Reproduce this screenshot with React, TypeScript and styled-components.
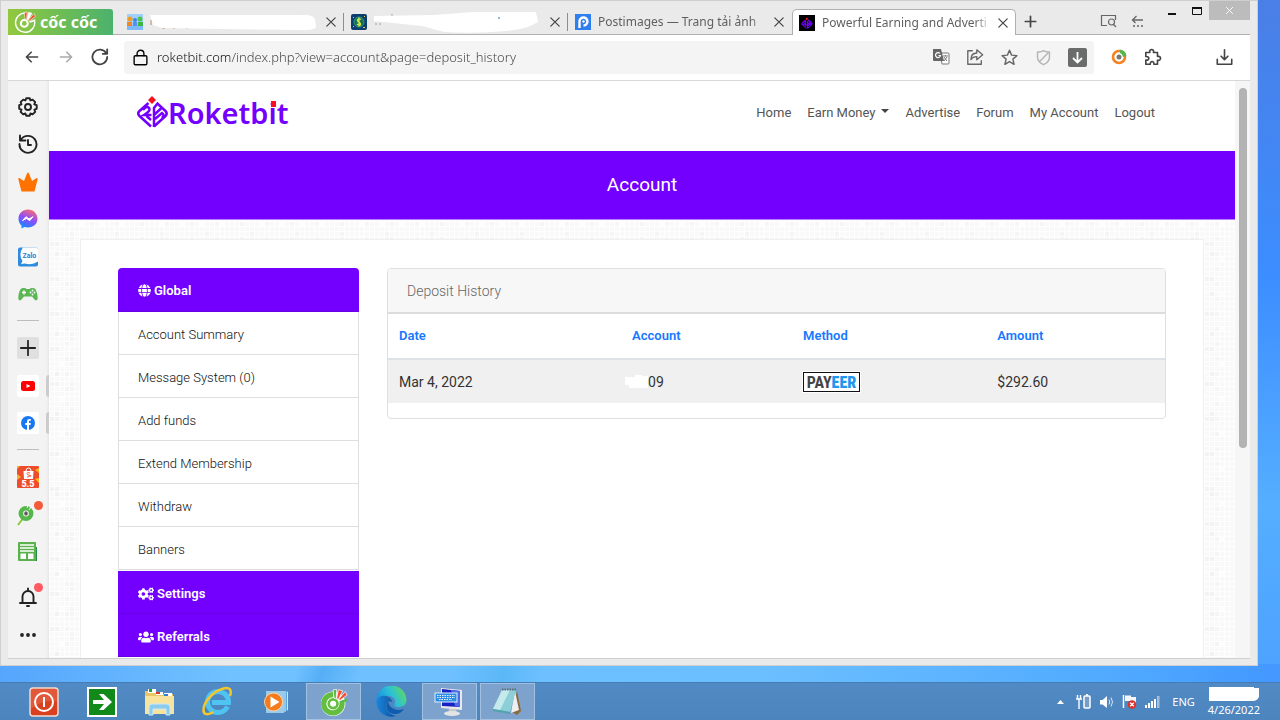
import React from "react";
import styled, { createGlobalStyle, css } from "styled-components";
import { FaGlobe, FaCogs, FaUsers } from "react-icons/fa";

const uiFont = `"Noto Sans", "Open Sans", sans-serif`;
const siteFont = `Roboto, "Liberation Sans", sans-serif`;
const purple = "#7300ff";

const GlobalStyle = createGlobalStyle`
  *, *::before, *::after { box-sizing: border-box; }
  body { margin: 0; font-family: ${uiFont}; overflow: hidden; }
  button { border: 0; padding: 0; background: none; font: inherit; color: inherit; cursor: pointer; }
  a { color: inherit; text-decoration: none; }
  ul { list-style: none; margin: 0; padding: 0; }
  h1, h2 { margin: 0; font-weight: 400; }
  svg { display: block; flex: none; }
`;

const Desktop = styled.div`
  height: 100vh;
  display: flex;
  flex-direction: column;
  background:
    linear-gradient(110deg, transparent 0 23%, #3f9fec88 25%, transparent 28% 35%, #48aef077 39%, transparent 42%) 0 100% / 100% 56px no-repeat,
    linear-gradient(90deg, #55a6fd, #70c1ff 18%, #6bbfff 60%, #50a9ff 88%, #4397ff) 0 100% / 100% 56px no-repeat,
    linear-gradient(#4a7fe6, #3c8dff 38%, #55aeff 70%, #4b9fff);
`;

const Window = styled.main`
  flex: 1;
  min-height: 0;
  display: flex;
  flex-direction: column;
  margin: 0 22px 16px 0;
  padding: 0 7px 6px;
  background: #eaeaea;
  border: 1px solid #cfcfcf;
`;

/* ---------- tab strip ---------- */

const TabStrip = styled.header`
  height: 34px;
  display: flex;
  align-items: flex-end;
  box-shadow: inset 0 -1px #b0b0b0;
`;

const BrandButton = styled.button`
  width: 105px;
  height: 26px;
  margin-right: 7px;
  display: flex;
  align-items: center;
  gap: 4px;
  padding-left: 6px;
  border-radius: 0 3px 0 0;
  background: linear-gradient(90deg, #92c83e, #4bb26d);
  color: #fff;
  font: 700 16px/20px "Noto Sans", sans-serif;
`;

const Tabs = styled.div`
  display: flex;
  align-items: flex-end;
  flex: 0 1 896px;
  min-width: 0;
`;

const Tab = styled.div<{ $active?: boolean; $divided?: boolean }>`
  flex: 1 1 0;
  min-width: 0;
  height: 26px;
  display: flex;
  align-items: center;
  gap: 7px;
  padding: 0 5px 0 7px;
  color: #5f5f5f;
  font-size: 12px;
  line-height: 20px;
  ${(p) =>
    p.$divided &&
    css`
      background: linear-gradient(#8d8d8d, #8d8d8d) 100% 4px / 1px 18px no-repeat;
    `}
  ${(p) =>
    p.$active &&
    css`
      background: #fff;
      border: 1px solid #b0b0b0;
      border-bottom: 0;
      border-radius: 5px 5px 0 0;
      padding: 0 4px 0 6px;
    `}
`;

const TabTitle = styled.span`
  flex: 1;
  min-width: 0;
  overflow: hidden;
  white-space: nowrap;
  mask-image: linear-gradient(90deg, #000 92%, #0003);
`;

const TabCover = styled.span`
  flex: 1;
  min-width: 0;
  display: flex;
  overflow: hidden;
`;

const IconButton = styled.button<{ $w?: number; $color?: string }>`
  width: ${(p) => p.$w ?? 34}px;
  height: 28px;
  flex: none;
  display: flex;
  align-items: center;
  justify-content: center;
  color: ${(p) => p.$color ?? "#444"};
`;

const StripTools = styled.div`
  display: flex;
  margin-left: auto;
`;

const WindowControls = styled.div`
  align-self: flex-start;
  display: flex;
  margin-left: 6px;
`;

const ControlButton = styled.button<{ $close?: boolean }>`
  width: ${(p) => (p.$close ? 41 : 25)}px;
  height: 19px;
  display: flex;
  align-items: center;
  justify-content: center;
  color: ${(p) => (p.$close ? "#fff" : "#111")};
  background: ${(p) => (p.$close ? "#bcbcbc" : "none")};
`;

/* ---------- toolbar ---------- */

const Toolbar = styled.div`
  height: 46px;
  display: flex;
  align-items: center;
  padding: 0 9px 1px 7px;
  background: #fff;
  border-bottom: 1px solid #d8d8d8;
`;

const AddressBar = styled.form`
  flex: 1;
  min-width: 0;
  height: 33px;
  display: flex;
  align-items: center;
  margin: 0 8px 0 7px;
  padding-left: 8px;
  border-radius: 3px;
  background: #f4f4f4;
`;

const AddressInput = styled.input`
  flex: 1;
  min-width: 0;
  height: 24px;
  margin-left: 8px;
  padding: 0;
  border: 0;
  outline: 0;
  font: 300 13px/20px ${uiFont};
  background: linear-gradient(90deg, #111 73px, #444 73px);
  background-clip: text;
  -webkit-text-fill-color: transparent;
`;

const Spacer = styled.span`
  width: 37px;
`;

/* ---------- body ---------- */

const Body = styled.div`
  flex: 1;
  min-height: 0;
  display: flex;
  background: #fff;
  border-bottom: 1px solid #d0d0d0;
`;

const Rail = styled.nav`
  width: 41px;
  flex: none;
  display: flex;
  flex-direction: column;
  align-items: center;
  padding: 12px 1px 9px 0;
  background: linear-gradient(90deg, #f3f3f3 38px, #e6e6e6);
  overflow: hidden;
`;

const RailGroup = styled.div<{ $h: number; $bottom?: boolean }>`
  height: ${(p) => p.$h}px;
  flex: none;
  display: flex;
  flex-direction: column;
  justify-content: space-between;
  margin-top: ${(p) => (p.$bottom ? "auto" : "0")};
`;

const RailButton = styled.button<{ $bg?: string }>`
  position: relative;
  width: 28px;
  height: 28px;
  display: flex;
  align-items: center;
  justify-content: center;
  color: #222;
  &::before {
    content: "";
    position: absolute;
    inset: 3px;
    border-radius: 2px;
    background: ${(p) => p.$bg ?? "none"};
  }
  & > svg {
    position: relative;
  }
`;

const RunningMark = styled.i`
  position: absolute;
  right: -8px;
  top: 3px;
  width: 4px;
  height: 22px;
  border-radius: 3px 0 0 3px;
  background: #ccc;
`;

const Dot = styled.i<{ $color: string }>`
  position: absolute;
  right: -1px;
  top: 0;
  width: 9px;
  height: 9px;
  border-radius: 50%;
  background: ${(p) => p.$color};
`;

const RailRule = styled.hr`
  width: 22px;
  height: 1px;
  margin: 12px 0 13px;
  flex: none;
  border: 0;
  background: #bdbdbd;
`;

const Site = styled.div`
  flex: 1;
  min-width: 0;
  display: flex;
  flex-direction: column;
  font-family: ${siteFont};
  overflow: hidden;
  background:
    repeating-linear-gradient(90deg, #fefefe 0 1px, transparent 1px 5px),
    repeating-linear-gradient(#fefefe 0 1px, transparent 1px 5px),
    conic-gradient(from 0deg at 5px 5px, transparent 75%, #f2f2f2 0) 5px 10px / 35px 40px,
    conic-gradient(from 0deg at 5px 5px, transparent 75%, #f5f5f5 0) 15px 5px / 25px 15px,
    conic-gradient(from 0deg at 10px 5px, transparent 75%, #f3f3f3 0) 0 20px / 55px 35px,
    conic-gradient(from 0deg at 5px 10px, transparent 75%, #f5f5f5 0) 20px 0 / 45px 25px,
    conic-gradient(from 0deg at 5px 5px, transparent 75%, #fdfdfd 0) 10px 0 / 20px 35px,
    #f9f9f9;
`;

const SiteHeader = styled.header`
  height: 70px;
  flex: none;
  display: flex;
  align-items: center;
  justify-content: space-between;
  padding: 0 80px 7px 88px;
  background: #fff;
`;

const Logo = styled.a`
  display: flex;
  align-items: center;
  color: ${purple};
  font: 600 29px/36px "Noto Sans", sans-serif;
`;

const DottedI = styled.span`
  position: relative;
  &::after {
    content: "";
    position: absolute;
    left: 2px;
    top: 8px;
    width: 5px;
    height: 6px;
    background: #f5121c;
  }
`;

const SiteNav = styled.nav`
  display: flex;
  gap: 16px;
  color: #555;
  font-size: 13px;
  line-height: 20px;
`;

const NavLink = styled.a<{ $menu?: boolean }>`
  white-space: nowrap;
  ${(p) =>
    p.$menu &&
    css`
      &::after {
        content: "";
        display: inline-block;
        margin-left: 6px;
        vertical-align: 4px;
        border: 4px solid transparent;
        border-top-color: #444;
        border-bottom: 0;
      }
    `}
`;

const Banner = styled.section`
  height: 69px;
  flex: none;
  display: flex;
  align-items: center;
  justify-content: center;
  background: ${purple};
  color: #fff;
  border-bottom: 1px solid #b981ff;
  h1 {
    font-size: 19px;
    line-height: 28px;
  }
`;

const Sheet = styled.section`
  flex: 1 0 auto;
  display: flex;
  align-items: flex-start;
  gap: 28px;
  margin: 19px 31px 0;
  padding: 28px 37px 0;
  background: #fff;
  border: 1px solid #efefef;
  border-bottom: 0;
`;

const Menu = styled.aside`
  flex: 0 0 241px;
`;

const MenuHead = styled.button<{ $first?: boolean }>`
  width: 100%;
  height: ${(p) => (p.$first ? 44 : 43)}px;
  display: flex;
  align-items: center;
  gap: 3px;
  padding: ${(p) => (p.$first ? 2 : 3)}px 20px 0;
  border-radius: ${(p) => (p.$first ? "4px 4px 0 0" : "0")};
  border-bottom: 1px solid #6700e4;
  background: ${purple};
  color: #fff;
  font: 600 13px/20px ${siteFont};
`;

const MenuList = styled.ul`
  margin-bottom: 1px;
  border: 1px solid #dfdfdf;
  border-width: 0 1px;
`;

const MenuItem = styled.li`
  height: 43px;
  padding: 13px 19px 0;
  border-bottom: 1px solid #dfdfdf;
  color: #111;
  font-size: 13px;
  font-weight: 300;
  line-height: 20px;
`;

const Panel = styled.section`
  flex: 1;
  min-width: 0;
  padding-bottom: 15px;
  border: 1px solid #dfdfdf;
  border-radius: 4px;
  overflow: hidden;
  h2 {
    height: 43px;
    padding: 12px 19px 0;
    background: #f7f7f7;
    color: #666;
    font-size: 14px;
    font-weight: 300;
    line-height: 20px;
  }
`;

const HistoryTable = styled.table`
  width: 100%;
  table-layout: fixed;
  border-collapse: separate;
  border-spacing: 0;
  font-size: 14px;
  line-height: 20px;
  text-align: left;
  th,
  td {
    padding: 0 11px;
  }
  th {
    height: 48px;
    color: #1677ff;
    font-size: 13px;
    font-weight: 600;
    border-top: 2px solid #dcdcdc;
    border-bottom: 2px solid #dee2e6;
  }
  td {
    height: 43px;
    background: #f0f0f0;
    color: #333;
  }
`;

const Col = styled.col<{ $w: number }>`
  width: ${(p) => p.$w}%;
`;

const AccountNo = styled.span`
  display: flex;
  align-items: center;
  margin-left: -7px;
`;

const Payeer = styled.span`
  width: 57px;
  height: 20px;
  display: flex;
  justify-content: center;
  border: 1px solid #111;
  background: #fff;
  color: #444;
  font: 700 16px/19px "Liberation Sans Narrow", "Roboto Condensed", Roboto, sans-serif;
  box-shadow: 0 0 0 1px #fff;
  b {
    color: #1f97ee;
  }
`;

const ScrollTrack = styled.div`
  width: 15px;
  flex: none;
  padding: 7px 4px;
  background: #f6f6f6;
`;

const ScrollThumb = styled.div`
  width: 8px;
  height: 64%;
  border-radius: 4px;
  background: #b3b3b3;
`;

/* ---------- taskbar ---------- */

const Taskbar = styled.footer`
  height: 38px;
  flex: none;
  display: flex;
  align-items: center;
  padding: 0 20px 0 16px;
  background: linear-gradient(#528ac5, #4c84bd);
  border-top: 1px solid #447cb5;
  color: #fff;
`;

const TaskButtons = styled.div`
  display: flex;
  gap: 3px;
`;

const TaskButton = styled.button<{ $open?: boolean }>`
  width: 55px;
  height: 37px;
  display: flex;
  align-items: center;
  justify-content: center;
  border: 1px solid ${(p) => (p.$open ? "#a2c0df" : "transparent")};
  background: ${(p) => (p.$open ? "#7ca2cd" : "none")};
`;

const Tray = styled.div`
  display: flex;
  align-items: center;
  margin-left: auto;
  font-size: 11px;
  line-height: 16px;
`;

const TrayButton = styled.button`
  width: 23px;
  height: 28px;
  display: flex;
  align-items: center;
  justify-content: center;
`;

const Language = styled.button`
  margin: 0 13px 0 8px;
`;

const Clock = styled.div`
  display: flex;
  flex-direction: column;
  align-items: center;
`;

/* ---------- drawings ---------- */

type LineProps = { size?: number; w?: number; children: React.ReactNode };
const Line = ({ size = 20, w = 1.5, children }: LineProps) => (
  <svg width={size} height={size} viewBox="0 0 20 20" fill="none" stroke="currentColor" strokeWidth={w} strokeLinecap="round" strokeLinejoin="round">
    {children}
  </svg>
);

const CloseIcon = ({ size = 12 }: { size?: number }) => (
  <Line size={size} w={2}>
    <path d="M3 3l14 14M17 3L3 17" />
  </Line>
);

const CocCocMark = ({ size, light }: { size: number; light?: boolean }) => {
  const c = light ? "#fff" : "#63bd3e";
  return (
    <svg width={size} height={size} viewBox="0 0 32 32">
      {!light && <circle cx="15" cy="18" r="14" fill="#fff" />}
      {light ? (
        <path d="M17 3A14 14 0 1 0 30 15" fill="none" stroke={c} strokeWidth="2" />
      ) : (
        <path d="M15 7.500A10.500 10.500 0 1 0 25 16" fill="none" stroke={c} strokeWidth="6" />
      )}
      <circle cx="15" cy="18" r="5" fill={light ? "none" : "#fff"} stroke={c} strokeWidth="3" />
      <path d="M15 2l4-.5-.5 11-2.500-1z" fill={light ? "#f2502e" : "#57b947"} stroke="#fff" strokeWidth=".8" />
      <path d="M21 2l5 1-5 10-2-1z" fill={light ? "#fff" : "#f2502e"} stroke="#fff" strokeWidth=".8" />
      <path d="M29 4l2 4-8 6-2-1z" fill="#f2502e" stroke="#fff" strokeWidth=".8" />
      <path d="M31 12l0 3-8 2-1-2z" fill={light ? "#fff" : "#57b947"} />
    </svg>
  );
};

const PeopleFavicon = () => (
  <svg width="16" height="16" viewBox="0 0 16 16">
    <rect width="16" height="16" fill="#9fd0fb" />
    <path d="M0 11h16v5H0z" fill="#7dbaf7" />
    <circle cx="3" cy="5" r="2.500" fill="#f39a23" /><path d="M0 8h5v4H0z" fill="#f0852a" />
    <circle cx="8" cy="6" r="2" fill="#3d87e8" /><path d="M6 8h4v4H6z" fill="#5a8fe8" />
    <circle cx="13" cy="5" r="2.500" fill="#4fc24c" /><path d="M11 8h5v4h-5z" fill="#3db548" />
  </svg>
);

const CoinFavicon = () => (
  <svg width="16" height="16" viewBox="0 0 16 16">
    <rect width="16" height="16" rx="2" fill="#0d3f6e" />
    <circle cx="8" cy="8" r="5" fill="#14704f" stroke="#2a9a86" />
    <path d="M10 5.500C7 4 5.500 6 7 7.500S10 9 9.500 10.500 7 11 6 10M8 3.500v9" fill="none" stroke="#d9e64a" strokeWidth="1.300" />
    <path d="M2 3h1v1H2zM13 2h1v1h-1zM2 12h1v1H2zM12 13h2v1h-2z" fill="#f3c83a" />
  </svg>
);

const PostFavicon = () => (
  <svg width="16" height="16" viewBox="0 0 16 16">
    <rect width="16" height="16" fill="#2f7ef0" />
    <path d="M4.500 14V8A4 4 0 1 1 8.500 11.500" fill="none" stroke="#fff" strokeWidth="2.400" />
    <circle cx="8.500" cy="7.500" r="1.200" fill="#fff" />
  </svg>
);

const RoketShape = ({ w = 1.8 }: { w?: number }) => (
  <g>
    <path d="M11.500 7L2.500 15Q0 17.500 2.500 20L14 30.500M6 14q4-5 6-2t-5 7h7.500M9.500 20l4.500 4" fill="none" stroke="#7300ff" strokeWidth={w} />
    <path d="M17 31V12l3.500-4.500 8 7.500q2.500 2.500 0 5L17 30.500M17 19l7.500-7M18 23l7-6q3 2 0 5" fill="none" stroke="#7300ff" strokeWidth={w} />
    <path d="M15 0l4 4-4 4-4-4z" fill="#f5121c" />
  </g>
);

const RoketMark = () => (
  <svg width="31" height="33" viewBox="0 0 31 33">
    <RoketShape w={2.5} />
  </svg>
);

const RoketFavicon = () => (
  <svg width="16" height="16" viewBox="-7 -7 45 45">
    <rect x="-7" y="-7" width="45" height="45" fill="#000" />
    <RoketShape w={3} />
  </svg>
);

const TranslateIcon = () => (
  <svg width="18" height="18" viewBox="0 0 18 18">
    <path d="M8 5h8a1 1 0 0 1 1 1v9a1 1 0 0 1-1 1H10z" fill="#fff" stroke="#777" />
    <path d="M1 1h8l3 12H2a1 1 0 0 1-1-1z" fill="#666" />
    <path d="M8 5.500a2.500 2.500 0 1 0 .500 2H6.500" fill="none" stroke="#fff" strokeWidth="1.200" />
    <path d="M11 8h5M13.500 7v1M12 9l3 4M15 9l-3 4" stroke="#777" fill="none" />
  </svg>
);

const PuzzleIcon = () => (
  <Line size={18} w={1.8}>
    <path d="M2 5h4.500c-1.500-4.500 5.500-4.500 4 0H15v4.500c4.500-1.500 4.500 5.500 0 4V18h-4c.5-4-4.500-4-4 0H2v-4.500c4.500.5 4.500-4.500 0-4z" />
  </Line>
);

const Messenger = () => (
  <svg width="20" height="20" viewBox="0 0 20 20">
    <defs>
      <linearGradient id="msg" x1="0.300" y1="1" x2="0.700" y2="0">
        <stop offset="0" stopColor="#0b8dff" /><stop offset="0.500" stopColor="#8b4dfb" /><stop offset="1" stopColor="#ff6a70" />
      </linearGradient>
    </defs>
    <path d="M10 .5C4.500.5.500 4.500.500 9.700c0 2.800 1.100 5.200 3 6.800v3l2.900-1.600c1.100.3 2.300.5 3.600.5 5.500 0 9.500-3.800 9.500-8.700S15.500.5 10 .5z" fill="url(#msg)" />
    <path d="M4.500 11.500L8 7.700l3 2.300 4-2.300-3.300 4-3.100-2.300z" fill="#fff" stroke="#fff" strokeLinejoin="round" />
  </svg>
);

const Zalo = () => (
  <svg width="20" height="20" viewBox="0 0 20 20">
    <path d="M2 .5h16a2 2 0 0 1 2 2v15a2 2 0 0 1-2 2H2a2 2 0 0 1-2-2v-15a2 2 0 0 1 2-2z" fill="#2f8bdb" />
    <path d="M5 .5h13a2 2 0 0 1 2 2v12q-6 4-13 2l-4 .500 1.500-3Q0 7 5 .5z" fill="#fff" />
    <text x="4.500" y="11" fontFamily="Roboto, sans-serif" fontSize="7" fontWeight="700" fill="#1f7fd6">Zalo</text>
  </svg>
);

const Gamepad = () => (
  <svg width="20" height="20" viewBox="0 0 20 20">
    <path d="M5 4h2l1.500 1h3L13 4h2c3 0 4.500 5 4.700 10 .1 2.500-2 3-3.200 1.500L14 12.500H6L3.500 15.500C2.300 17 .2 16.500.3 14 .5 9 2 4 5 4z" fill="#5cb654" />
    <path d="M6 6.500v4M4 8.500h4" stroke="#fff" strokeWidth="1.400" />
    <circle cx="12.500" cy="8.500" r=".9" fill="#fff" /><circle cx="14.500" cy="6.500" r=".9" fill="#fff" /><circle cx="16.500" cy="8.500" r=".9" fill="#fff" /><circle cx="14.500" cy="10.500" r=".9" fill="#fff" />
  </svg>
);

const Shopee = () => (
  <svg width="22" height="22" viewBox="0 0 22 22">
    <rect width="22" height="22" rx="1" fill="#ee4d2d" />
    <path d="M0 8l4 3-4 3zM22 2l-4 2 4 3zM0 0h3L0 3zM22 12l-4 1 4 4z" fill="#f8b51f" />
    <path d="M6.500 5h10l-.500 8H7z" fill="#fff" /><path d="M9 5q0-3 2.500-3T14 5" fill="none" stroke="#fff" />
    <path d="M13 7q-3-1.200-3 .500t3 2-3 1.500" fill="none" stroke="#ee4d2d" strokeWidth=".9" />
    <text x="11" y="21" textAnchor="middle" fontFamily="Roboto, sans-serif" fontSize="9" fontWeight="900" fill="#fff">5.5</text>
  </svg>
);

const RocketSearch = () => (
  <svg width="22" height="22" viewBox="0 0 22 22">
    <path d="M1 21l6-8" stroke="#8ac740" strokeWidth="2" />
    <circle cx="9" cy="9.500" r="5.200" fill="#fff" stroke="#55b64a" strokeWidth="4.500" />
    <circle cx="9" cy="9.500" r="2" fill="#555" stroke="#aaa" />
    <path d="M10 4l1-3M12 6l2-3" stroke="#fff" />
  </svg>
);

const News = () => (
  <svg width="20" height="20" viewBox="0 0 20 20">
    <path d="M17 5h2v14H3z" fill="#2b8b4b" />
    <rect x="0" y="0" width="18" height="19" rx="1" fill="#5bb24c" />
    <path d="M2 3h14M2 6h14M2 9h14" stroke="#fff" strokeWidth="1.400" />
    <path d="M2.500 11.500h5.500v5.500H2.500zM10 11.500h5.500v5.500H10z" fill="#fff" />
  </svg>
);

const Edge = () => (
  <svg width="31" height="31" viewBox="0 0 31 31">
    <defs>
      <linearGradient id="edgeA" x1="0" x2="1" y1="0.600" y2="0.200">
        <stop offset="0" stopColor="#1b8fe0" /><stop offset="0.500" stopColor="#2cc0d8" /><stop offset="1" stopColor="#62dd52" />
      </linearGradient>
      <linearGradient id="edgeB" x1="0" x2="1"><stop offset="0" stopColor="#1a86dc" /><stop offset="1" stopColor="#0e4f9c" /></linearGradient>
    </defs>
    <path d="M.5 15A15 15 0 0 1 30.500 14c0 5-4 7-8 7-3 0-5-1-4-3 2-4-1-8-6-8C7 10 2 13 .5 17z" fill="url(#edgeA)" />
    <path d="M.5 15C2 10 7 9 10 10c4 1 6 4 6 6-3-2-6 0-6 4 0 5 5 9 10 10-10 3-20-4-19.500-15z" fill="url(#edgeB)" />
    <path d="M12 15c-4 6 0 13 7 13 4 0 7-2 9-5-8 3-15-1-16-8z" fill="#0d5cae" />
  </svg>
);

const InternetExplorer = () => (
  <svg width="31" height="31" viewBox="0 0 31 31">
    <path d="M25.500 20.500A10.500 10.500 0 1 1 26.500 16.500H10" fill="none" stroke="#4fc4f3" strokeWidth="5" />
    <path d="M28 10c2-6 0-10-8-7C10 6 1 17 1.500 25c.5 4 5 4 10 1" fill="none" stroke="#f3c62c" strokeWidth="2.500" />
  </svg>
);

const Folder = () => (
  <svg width="31" height="30" viewBox="0 0 31 30">
    <path d="M1 4h11l2 3h15v20H1z" fill="#e9c766" /><path d="M4 2h8v4H4z" fill="#fff" /><path d="M5 2h3v3H5z" fill="#24a03a" />
    <path d="M12 5h7v3h-7z" fill="#fff" /><path d="M12 5h4v2h-4z" fill="#d43c2c" /><path d="M20 6h8v4h-8z" fill="#fff" /><path d="M20 7h4v2h-4z" fill="#2c82d4" />
    <path d="M1 9h29v18H1z" fill="#f7e39c" />
    <path d="M5 28V20q0-3 3-3h15q3 0 3 3v8h-4v-6H9v6z" fill="#8ccbec" stroke="#c9ebfb" />
  </svg>
);

const MediaPlayer = () => (
  <svg width="26" height="26" viewBox="0 0 26 26">
    <path d="M6 2h19v20H6z" fill="#5fa6dd" /><path d="M3 2h18v22H3z" fill="#9ccbea" /><path d="M22 2v21M24.500 3v18" stroke="#cde7f7" />
    <circle cx="10.500" cy="13" r="9" fill="#f57c1c" stroke="#fbd3a8" /><path d="M7.500 7.500l9 5.500-9 5.500z" fill="#fff" />
  </svg>
);

const RedPower = () => (
  <svg width="30" height="30" viewBox="0 0 30 30">
    <rect x="1" y="1" width="28" height="28" rx="3" fill="#d8401f" stroke="#f3dcd4" strokeWidth="1.500" />
    <path d="M2 2h26v12Q14 12 2 22z" fill="#ea6b4b" opacity=".6" />
    <circle cx="15" cy="15" r="9" fill="none" stroke="#fff" strokeWidth="2" /><path d="M15 10v10" stroke="#fff" strokeWidth="2" />
  </svg>
);

const GreenArrow = () => (
  <svg width="30" height="30" viewBox="0 0 30 30">
    <rect x="1" y="1" width="28" height="28" fill="#118a1a" stroke="#fff" strokeWidth="2" />
    <path d="M6 13h11l-5-6h4.500l8.500 8-8.500 8H12l5-6H6z" fill="#fff" />
  </svg>
);

const OnScreenKeyboard = () => (
  <svg width="31" height="30" viewBox="0 0 31 30">
    <path d="M7 1l21 2v20L7 21z" fill="#e8e8e8" /><path d="M8 2l18 2v16L8 19z" fill="#1820c4" /><path d="M17 3l9 1v16l-5-1z" fill="#4d6be6" />
    <path d="M15 22h7l1 4h-9z" fill="#c9c9c9" /><ellipse cx="18" cy="26.500" rx="8" ry="2.500" fill="#e4e4e4" />
    <rect x="1" y="6" width="22" height="9" fill="#2f8de4" stroke="#dff0ff" /><path d="M3 8.500h18M3 10.500h18M5 12.500h13" stroke="#e6f4ff" strokeDasharray="1.500 1" />
  </svg>
);

const Notepad = () => (
  <svg width="31" height="30" viewBox="0 0 31 30">
    <path d="M25 4l4 20-4 4-5-3z" fill="#8a6a3c" /><path d="M23 4l4 19-8 3z" fill="#eee" />
    <path d="M10 3h14l-6 22L1 22z" fill="#8ccfd6" /><path d="M10 3h8L8 23l-7-1z" fill="#c4eaec" />
    <path d="M10 2.500h14" stroke="#5d6d72" strokeWidth="2" strokeDasharray="1.500 1" />
    <path d="M1 22l17 3v2L1 24z" fill="#4fa3ae" />
  </svg>
);

const navLinks = ["Home", "Earn Money", "Advertise", "Forum", "My Account", "Logout"];
const menuItems = ["Account Summary", "Message System (0)", "Add funds", "Extend Membership", "Withdraw", "Banners"];

export default function App() {
  return (
    <Desktop>
      <GlobalStyle />
      <Window>
        <TabStrip>
          <BrandButton>
            <CocCocMark size={22} light />
            cốc cốc
          </BrandButton>
          <Tabs>
            <Tab $divided>
              <PeopleFavicon />
              <TabCover>
                <svg width="172" height="20" viewBox="0 0 172 20">
                  <path d="M1 8v5M12 16h3M23 16h2M36 16h2" stroke="#b98a66" />
                  <path d="M0 3h150q12-1 15 4l1 9q-4 2-10 2L70 17l-58-1-9-3z" fill="#fff" />
                </svg>
              </TabCover>
              <IconButton $w={16} aria-label="Close tab"><CloseIcon /></IconButton>
            </Tab>
            <Tab $divided>
              <CoinFavicon />
              <TabCover>
                <svg width="172" height="24" viewBox="0 0 172 24">
                  <path d="M1 14h2M5 14h2M17 5h2" stroke="#999" />
                  <path d="M0 6l60-1 40-3h62l2 10q-10 7-32 9-30 3-62 1L48 16 0 11z" fill="#fff" />
                  <path d="M124 8h2" stroke="#3a6ac4" />
                </svg>
              </TabCover>
              <IconButton $w={16} aria-label="Close tab"><CloseIcon /></IconButton>
            </Tab>
            <Tab>
              <PostFavicon />
              <TabTitle>Postimages — Trang tải ảnh</TabTitle>
              <IconButton $w={16} aria-label="Close tab"><CloseIcon /></IconButton>
            </Tab>
            <Tab $active>
              <RoketFavicon />
              <TabTitle>Powerful Earning and Adverti</TabTitle>
              <IconButton $w={16} aria-label="Close tab"><CloseIcon /></IconButton>
            </Tab>
          </Tabs>
          <IconButton $w={28} aria-label="New tab">
            <Line size={13} w={2.6}><path d="M10 2v16M2 10h16" /></Line>
          </IconButton>
          <StripTools>
            <IconButton $w={30} $color="#666" aria-label="Search tabs">
              <svg width="17" height="14" viewBox="0 0 17 14" fill="none" stroke="currentColor" strokeWidth="1.200">
                <path d="M7 11.500H1.500v-10h14V6" /><circle cx="11.500" cy="8" r="3" /><path d="M13.500 10.500L16 13" />
              </svg>
            </IconButton>
            <IconButton $w={30} $color="#666" aria-label="Reopen closed tab">
              <svg width="14" height="14" viewBox="0 0 14 14" fill="none" stroke="currentColor" strokeWidth="1.300">
                <path d="M12 6H1.500M5.500 2l-4 4 3 3" /><path d="M2 12h11" strokeDasharray="2 2" />
              </svg>
            </IconButton>
          </StripTools>
          <WindowControls>
            <ControlButton aria-label="Minimize">
              <svg width="10" height="10" viewBox="0 0 10 10"><path d="M1 8h8" stroke="currentColor" strokeWidth="2" /></svg>
            </ControlButton>
            <ControlButton aria-label="Maximize">
              <svg width="10" height="8" viewBox="0 0 10 8"><path d="M.5 0v7.500h9V0" fill="none" stroke="currentColor" /><path d="M0 1h10" stroke="currentColor" strokeWidth="2" /></svg>
            </ControlButton>
            <ControlButton $close aria-label="Close window"><CloseIcon size={9} /></ControlButton>
          </WindowControls>
        </TabStrip>

        <Toolbar>
          <IconButton aria-label="Back"><Line size={16} w={2}><path d="M17 10H3M9 4l-6 6 6 6" /></Line></IconButton>
          <IconButton $color="#aaa" aria-label="Forward"><Line size={16} w={2}><path d="M3 10h14M11 4l6 6-6 6" /></Line></IconButton>
          <IconButton aria-label="Reload"><Line size={18} w={2}><path d="M17 6A8.200 8.200 0 1 0 18 10M18 1.500v5h-5" /></Line></IconButton>
          <AddressBar onSubmit={(e) => e.preventDefault()}>
            <Line size={17} w={1.6}><rect x="2.500" y="8" width="15" height="10.500" rx="1.500" /><path d="M6 8V5.500a4 4 0 0 1 8 0V8" /></Line>
            <AddressInput aria-label="Address" defaultValue="roketbit.com/index.php?view=account&page=deposit_history" />
            <IconButton $color="#666" aria-label="Translate"><TranslateIcon /></IconButton>
            <IconButton $color="#666" aria-label="Share">
              <Line size={18}><path d="M7 3H2v15h15v-4M12 2l6.500 5.500L12 13v-3.500c-3 0-5 1-6.500 3.500 0-4 2-7.500 6.500-7.500z" /></Line>
            </IconButton>
            <IconButton $color="#666" aria-label="Bookmark">
              <Line size={17} w={1.7}><path d="M10 1.500l2.500 5.700 6.200.6-4.700 4.100 1.400 6.100L10 14.800 4.600 18 6 11.900 1.300 7.800l6.200-.6z" /></Line>
            </IconButton>
            <IconButton $color="#b5b5b5" aria-label="Ad blocker">
              <Line size={17} w={1.7}><path d="M10 2q3 2 7 1.500V10q0 5-7 8.500Q3 15 3 10V3.500Q7 4 10 2zM6 14L15 5" /></Line>
            </IconButton>
            <IconButton aria-label="Save media">
              <svg width="19" height="19" viewBox="0 0 19 19"><rect width="19" height="19" rx="2" fill="#6a6c6c" /><path d="M9.500 4v10M5 10l4.500 4.500L14 10" fill="none" stroke="#fff" strokeWidth="1.800" /></svg>
            </IconButton>
          </AddressBar>
          <IconButton aria-label="Coc Coc points">
            <svg width="16" height="16" viewBox="0 0 16 16">
              <circle cx="8" cy="8" r="6" fill="none" stroke="#f58220" strokeWidth="2.600" />
              <path d="M9 .5a7.500 7.500 0 0 1 6.500 6.500l-3.500 1A5 5 0 0 0 9 4z" fill="#55b64a" />
              <circle cx="8" cy="8" r="2.500" fill="#777" />
            </svg>
          </IconButton>
          <IconButton aria-label="Extensions"><PuzzleIcon /></IconButton>
          <Spacer />
          <IconButton aria-label="Downloads"><Line size={17} w={1.9}><path d="M10 1v11M6 8.500l4 4 4-4M1.500 12v6h17v-6" /></Line></IconButton>
        </Toolbar>

        <Body>
          <Rail>
            <RailGroup $h={215}>
              <RailButton aria-label="Settings">
                <Line w={1.9}>
                  <circle cx="10" cy="10" r="3" />
                  <path d="M8.200 1.200h3.600l.6 2.200 2.200-.8 2.600 2.600-.9 2.100 2.400.9v3.600l-2.300.8.8 2.200-2.600 2.600-2.200-.9-.7 2.300H8.200l-.8-2.300-2.200.9-2.600-2.600.9-2.200-2.300-.8V8.200l2.300-.9-.9-2.100 2.600-2.600 2.200.8z" />
                </Line>
              </RailButton>
              <RailButton aria-label="History"><Line w={1.9}><path d="M3 5.500A8.500 8.500 0 1 1 1.500 10M2 1.500v5h5.500M10 6v5h3" /></Line></RailButton>
              <RailButton aria-label="Rewards">
                <svg width="20" height="20" viewBox="0 0 20 20"><path d="M3.500 19.500L.3 7q0-1.500 1.500-.8L6 9l3.200-8q.8-1 1.600 0L14 9l4.200-2.800q1.500-.7 1.500.8l-3.200 12.500z" fill="#ff7200" /></svg>
              </RailButton>
              <RailButton aria-label="Messenger"><Messenger /></RailButton>
              <RailButton aria-label="Zalo"><Zalo /></RailButton>
              <RailButton aria-label="Games"><Gamepad /></RailButton>
            </RailGroup>
            <RailRule />
            <RailGroup $h={103}>
              <RailButton $bg="#e0e0e0" aria-label="Add"><Line size={16} w={2.2}><path d="M10 1v18M1 10h18" /></Line></RailButton>
              <RailButton $bg="#fff" aria-label="YouTube">
                <svg width="14" height="10" viewBox="0 0 14 10"><rect width="14" height="10" rx="2.500" fill="#f00" /><path d="M5.500 3l4 2-4 2z" fill="#fff" /></svg>
                <RunningMark />
              </RailButton>
              <RailButton $bg="#fff" aria-label="Facebook">
                <svg width="14" height="14" viewBox="0 0 14 14"><circle cx="7" cy="7" r="7" fill="#1877f2" /><path d="M6 14V9H4.300V7H6V5.600C6 3.800 7 3 8.400 3l1.400.1v1.700H9c-.8 0-1 .4-1 1V7h1.800l-.3 2H8v5z" fill="#fff" /></svg>
                <RunningMark />
              </RailButton>
            </RailGroup>
            <RailRule />
            <RailGroup $h={103}>
              <RailButton aria-label="Shopee"><Shopee /></RailButton>
              <RailButton aria-label="Coc Coc search"><RocketSearch /><Dot $color="#f25a38" /></RailButton>
              <RailButton aria-label="News"><News /></RailButton>
            </RailGroup>
            <RailGroup $h={66} $bottom>
              <RailButton aria-label="Notifications">
                <Line w={1.9}><path d="M2 16h16M4.500 16V9.500a5.500 5.500 0 0 1 11 0V16M10 3V1.500M9 19h2" /></Line>
                <Dot $color="#ff5a5f" />
              </RailButton>
              <RailButton aria-label="More">
                <svg width="16" height="4" viewBox="0 0 16 4" fill="#222"><circle cx="2" cy="2" r="1.900" /><circle cx="8" cy="2" r="1.900" /><circle cx="14" cy="2" r="1.900" /></svg>
              </RailButton>
            </RailGroup>
          </Rail>

          <Site>
            <SiteHeader>
              <Logo href="#">
                <RoketMark />
                <span>Roketb<DottedI>i</DottedI>t</span>
              </Logo>
              <SiteNav>
                {navLinks.map((l) => (
                  <NavLink key={l} href="#" $menu={l === "Earn Money"}>{l}</NavLink>
                ))}
              </SiteNav>
            </SiteHeader>
            <Banner><h1>Account</h1></Banner>
            <Sheet>
              <Menu>
                <MenuHead $first><FaGlobe size={13} />Global</MenuHead>
                <MenuList>
                  {menuItems.map((m) => (
                    <MenuItem key={m}><a href="#">{m}</a></MenuItem>
                  ))}
                </MenuList>
                <MenuHead><FaCogs size={16} />Settings</MenuHead>
                <MenuHead><FaUsers size={16} />Referrals</MenuHead>
              </Menu>
              <Panel>
                <h2>Deposit History</h2>
                <HistoryTable>
                  <colgroup><Col $w={30} /><Col $w={22} /><Col $w={25} /><Col $w={23} /></colgroup>
                  <thead>
                    <tr><th>Date</th><th>Account</th><th>Method</th><th>Amount</th></tr>
                  </thead>
                  <tbody>
                    <tr>
                      <td>Mar 4, 2022</td>
                      <td>
                        <AccountNo>
                          <svg width="23" height="14" viewBox="0 0 23 14"><path d="M0 2h10V0h7v1h6v12H4v-3H0z" fill="#fff" /></svg>
                          09
                        </AccountNo>
                      </td>
                      <td><Payeer>PAY<b>EER</b></Payeer></td>
                      <td>$292.60</td>
                    </tr>
                  </tbody>
                </HistoryTable>
              </Panel>
            </Sheet>
          </Site>
          <ScrollTrack><ScrollThumb /></ScrollTrack>
        </Body>
      </Window>

      <Taskbar>
        <TaskButtons>
          <TaskButton aria-label="Shut down"><RedPower /></TaskButton>
          <TaskButton aria-label="Log off"><GreenArrow /></TaskButton>
          <TaskButton aria-label="File Explorer"><Folder /></TaskButton>
          <TaskButton aria-label="Internet Explorer"><InternetExplorer /></TaskButton>
          <TaskButton aria-label="Media Player"><MediaPlayer /></TaskButton>
          <TaskButton $open aria-label="Coc Coc"><CocCocMark size={28} /></TaskButton>
          <TaskButton aria-label="Edge"><Edge /></TaskButton>
          <TaskButton $open aria-label="On-Screen Keyboard"><OnScreenKeyboard /></TaskButton>
          <TaskButton $open aria-label="Notepad"><Notepad /></TaskButton>
        </TaskButtons>
        <Tray>
          <TrayButton aria-label="Show hidden icons"><svg width="7" height="4" viewBox="0 0 7 4"><path d="M0 4l3.500-4L7 4z" fill="#fff" /></svg></TrayButton>
          <TrayButton aria-label="Battery">
            <svg width="15" height="15" viewBox="0 0 15 15"><path d="M1.500 1v4h3V1M3 5v10M0 5h6" fill="none" stroke="#fff" strokeWidth="1.400" /><rect x="8" y="2" width="6" height="12" rx="1" fill="#789dc4" stroke="#fff" strokeWidth="1.500" /><path d="M10 0h2v2h-2z" fill="#fff" /></svg>
          </TrayButton>
          <TrayButton aria-label="Volume">
            <svg width="14" height="14" viewBox="0 0 14 14"><path d="M0 5h2.500L7 1v12L2.500 9.500H0z" fill="#fff" /><path d="M9 4.500q1.500 2.500 0 5M11 2.500q3 4.500 0 9" fill="none" stroke="#dfe9f4" /></svg>
          </TrayButton>
          <TrayButton aria-label="Action center">
            <svg width="15" height="15" viewBox="0 0 15 15"><path d="M1.500 1v13" stroke="#fff" strokeWidth="1.500" /><path d="M3 1.500h6V3h5v6H8V7H3z" fill="#f3f6fa" /><circle cx="10" cy="10.500" r="4.300" fill="#d8322a" /><path d="M8.200 8.700l3.600 3.600M11.800 8.700l-3.600 3.600" stroke="#fff" strokeWidth="1.300" /></svg>
          </TrayButton>
          <TrayButton aria-label="Network">
            <svg width="15" height="12" viewBox="0 0 15 12" fill="#fff"><path d="M0 9h2v3H0zM3 7h2v5H3zM6 5h2v7H6zM9 3h2v9H9z" /><path d="M12 0h2.500v12H12z" fill="#a9bfd8" /></svg>
          </TrayButton>
          <Language>ENG</Language>
          <Clock>
            <svg width="50" height="16" viewBox="0 0 50 16"><path d="M0 1h45v1h5v9q-2 4-6 4H0z" fill="#fff" /></svg>
            <time>4/26/2022</time>
          </Clock>
        </Tray>
      </Taskbar>
    </Desktop>
  );
}
